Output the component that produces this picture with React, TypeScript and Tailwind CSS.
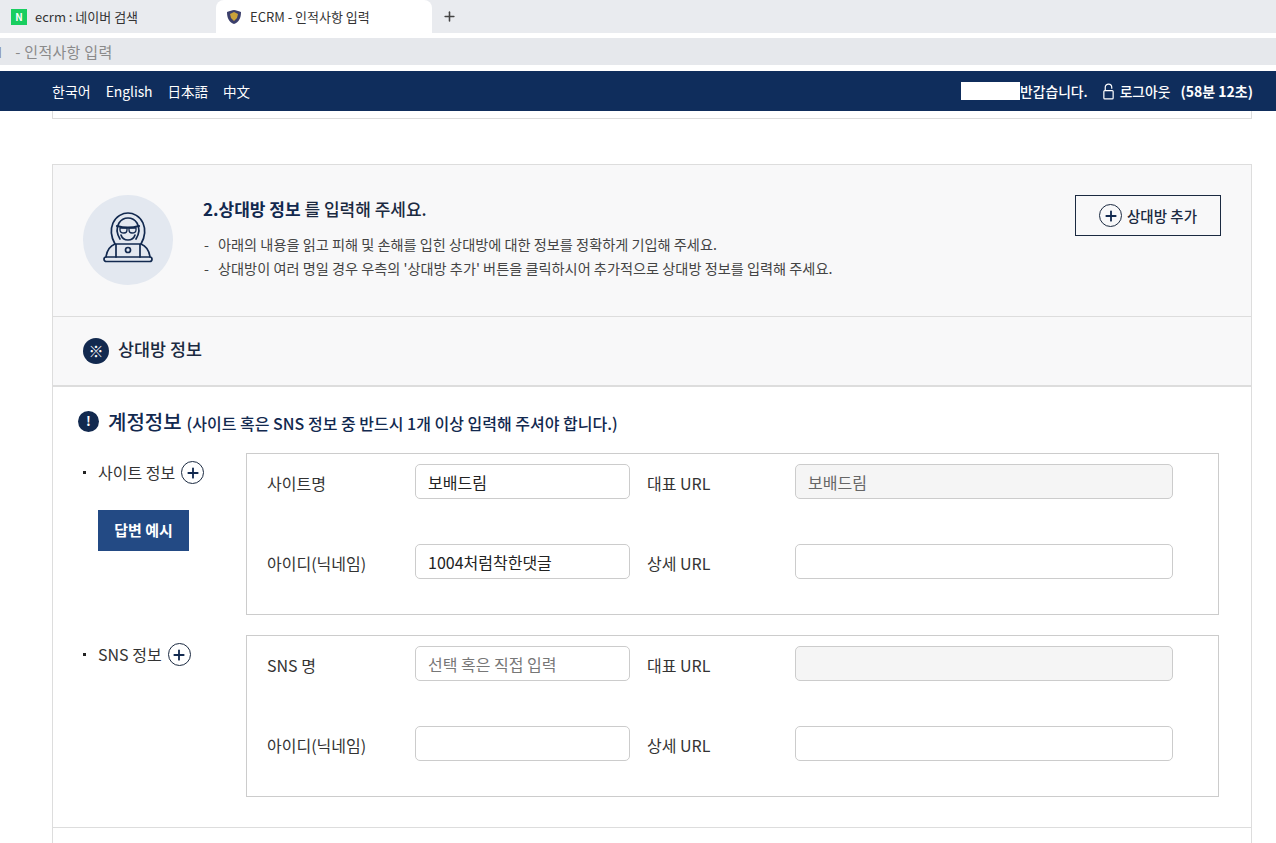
import { Plus } from 'lucide-react'

const CircleAdd = ({ className = '' }: { className?: string }) => (
  <span className={`w-[23px] h-[23px] rounded-full border border-[#1b2a41] flex items-center justify-center shrink-0 ${className}`}>
    <Plus className="w-4 h-4 text-[#12294f]" strokeWidth={2.75} />
  </span>
)

const Field = ({ value, placeholder, disabled, w }: { value?: string; placeholder?: string; disabled?: boolean; w: string }) => (
  <div
    className={`${w} h-[35px] rounded-[5px] border border-[#ccc] px-3 flex items-center text-[16px] ${
      disabled ? 'bg-[#f5f5f5] text-[#666]' : 'bg-white text-[#222]'
    }`}>
    {value ?? <span className="text-[#777]">{placeholder}</span>}
  </div>
)

const FormRow = ({ label, url, left, right }: { label: string; url: string; left: React.ReactNode; right: React.ReactNode }) => (
  <div className="flex items-start h-[35px]">
    <span className="w-[148px] text-[16px] text-[#333] pt-[5px] leading-[28px]">{label}</span>
    {left}
    <span className="w-[165px] pl-[17px] text-[16px] text-[#333] pt-[5px] leading-[28px]">{url}</span>
    {right}
  </div>
)

const HackerIcon = () => (
  <svg viewBox="0 0 52 56" className="w-[52px] h-[56px]" fill="none" stroke="#12294f" strokeWidth="1.7" strokeLinecap="round" strokeLinejoin="round">
    {/* hood */}
    <path d="M13 32C9 25 8 18 11 11 14 4 21 1 26 1s12 3 15 10c3 7 2 14-2 21" />
    <path d="M18 27c-3-5-4-11-1-16 2-3 5-5 9-5s7 2 9 5c3 5 2 11-1 16" />
    {/* glasses */}
    <path d="M15 14c7 2 15 2 22 0" strokeWidth="2.2" />
    <path d="M18 16h7v2c0 2-1 3-3 3s-4-1-4-3zM27 16h7v2c0 2-2 3-4 3s-3-1-3-3z" strokeWidth="1.3" />
    <path d="M19 23c1 3 4 5 7 5s6-2 7-5" />
    {/* shoulders */}
    <path d="M13 32c-5 2-8 6-9 13M39 32c5 2 8 6 9 13" />
    {/* laptop */}
    <path d="M14 45V32h24v13" />
    <circle cx="26" cy="38" r="2.500" />
    <rect x="2" y="45" width="48" height="4.500" rx="2.250" />
  </svg>
)

const SectionBox = ({ children }: { children: React.ReactNode }) => (
  <div className="w-[973px] h-[162px] border border-[#ccc] pt-[10px] pl-5 flex flex-col gap-[45px]">{children}</div>
)

export default function App() {
  return (
    <div
      className="w-[1276px] h-[843px] overflow-hidden bg-white text-[#222]"
      style={{ fontFamily: '"Noto Sans CJK KR", "Noto Sans", sans-serif' }}>
      {/* browser chrome */}
      <div className="h-[33px] bg-[#e9ebef] flex items-start">
        <div className="w-[216px] h-[33px] pl-[11px] flex items-center gap-2 text-[13px] text-[#333]">
          <span className="w-4 h-4 bg-[#19ce60] text-white text-[10px] font-bold flex items-center justify-center">N</span>
          <span>ecrm : 네이버 검색</span>
        </div>
        <div className="w-[216px] h-[33px] bg-white rounded-t-[8px] pl-[10px] flex items-center gap-2 text-[13px] text-[#333]">
          <svg viewBox="0 0 16 16" className="w-4 h-4">
            <path d="M1 3c3-1 5-2 7-2s4 1 7 2c0 6-2 10-7 12C3 13 1 9 1 3z" fill="#3b3f6b" />
            <path d="M4 5l4-2 4 2-1 4-3 3-3-3z" fill="#c9a23a" />
          </svg>
          <span>ECRM - 인적사항 입력</span>
        </div>
        <Plus className="w-[15px] h-[15px] ml-[10px] mt-[9px] text-[#444]" strokeWidth={2.5} />
      </div>
      <div className="h-[38px] pt-[5px] overflow-hidden">
        <div className="h-[27px] bg-[#e6e8ec] text-[15px] leading-[27px] tracking-[0.3px] text-[#8a8a8a] whitespace-nowrap overflow-hidden">
          <span className="block -ml-[10px]">
            <span className="mr-[9px]">M</span> - 인적사항 입력
          </span>
        </div>
      </div>

      {/* site header */}
      <header className="h-[40px] bg-[#0f2d5c] pl-[52px] pr-[23px] flex items-center justify-between text-white">
        <nav className="flex items-center gap-[15px] text-[14px]">
          <span>한국어</span>
          <span className="tracking-[-0.1px]">English</span>
          <span className="text-[13.5px]">日本語</span>
          <span className="text-[13.5px]">中文</span>
        </nav>
        <div className="flex items-center text-[14px] font-medium">
          <span className="w-[59px] h-[18px] bg-white" />
          <span className="text-[13.8px]">반갑습니다.</span>
          <svg viewBox="0 0 14 18" className="w-[13px] h-[17px] ml-[14px] mr-[5px]" fill="none" stroke="white" strokeWidth="1.3">
            <path d="M3.500 8V4.500a3.500 3.500 0 0 1 7 0V6" />
            <rect x="2" y="8" width="10" height="9" rx="1" />
          </svg>
          <span className="text-[13.8px]">로그아웃</span>
          <span className="ml-[10px] font-bold">(58분 12초)</span>
        </div>
      </header>

      <main className="pl-[52px] pr-[24px]">
        <div className="h-[8px] border-x border-b border-[#ddd]" />

        <section className="mt-[45px] border border-[#ddd] border-b-0">
          {/* intro */}
          <div className="h-[152px] bg-[#f8f8f9] border-b border-[#ddd] pl-[30px] pr-[30px] flex items-start">
            <div className="mt-[30px] w-[90px] h-[90px] rounded-full bg-[#e3e8f0] flex items-center justify-center">
              <HackerIcon />
            </div>
            <div className="ml-[30px] mt-[30px] flex-1">
              <h2 className="text-[17px] leading-[28px] font-medium text-[#1b2a41]">
                <b className="font-bold text-[#12294f]">2.상대방 정보</b> 를 입력해 주세요.
              </h2>
              <ul className="mt-[9px] text-[14.2px] leading-[24px] text-[#444]">
                <li className="flex">
                  <span className="w-[15px] pl-px">-</span>아래의 내용을 읽고 피해 및 손해를 입힌 상대방에 대한 정보를 정확하게 기입해 주세요.
                </li>
                <li className="flex">
                  <span className="w-[15px] pl-px">-</span>상대방이 여러 명일 경우 우측의 '상대방 추가' 버튼을 클릭하시어 추가적으로 상대방 정보를 입력해 주세요.
                </li>
              </ul>
            </div>
            <button className="mt-[30px] w-[146px] h-[41px] border border-[#1b2a41] flex items-center justify-center gap-[5px] text-[14.5px] font-medium text-[#1b2a41]">
              <CircleAdd />
              상대방 추가
            </button>
          </div>

          {/* section title */}
          <div className="h-[70px] bg-[#f8f8f9] border-b-2 border-[#ddd] pl-[30px] flex items-center gap-[9px]">
            <span className="w-[26px] h-[26px] rounded-full bg-[#12294f] text-white text-[15px] font-black flex items-center justify-center">※</span>
            <span className="pb-[3px] text-[17.4px] font-medium text-[#1b2a41]">상대방 정보</span>
          </div>

          {/* account info */}
          <div className="h-[441px] border-b border-[#ddd] pl-[25px] pr-[32px]">
            <div className="pt-[19px] flex items-center h-[52px]">
              <span className="mb-[3px] w-[21px] h-[21px] rounded-full bg-[#12294f] text-white text-[13px] font-bold flex items-center justify-center">!</span>
              <span className="mb-[2px] ml-[9px] text-[20px] font-medium text-[#12294f]">계정정보</span>
              <span className="ml-[5px] text-[16px] font-medium text-[#12294f]">(사이트 혹은 SNS 정보 중 반드시 1개 이상 입력해 주셔야 합니다.)</span>
            </div>

            <div className="mt-[14px] flex justify-between">
              <div className="w-[168px] pt-[8px]">
                <div className="flex items-center text-[16px] text-[#333] h-[24px]">
                  <span className="w-[3px] h-[3px] bg-[#222] mb-[2px] mr-[12px] ml-[5px]" />
                  <span className="pb-[2px]">사이트 정보</span>
                  <CircleAdd className="ml-[6px] mb-[1px]" />
                </div>
                <button className="mt-[25px] ml-[20px] w-[91px] h-[41px] bg-[#234a84] text-white text-[15px] font-bold pb-px">답변 예시</button>
              </div>
              <SectionBox>
                <FormRow
                  label="사이트명"
                  url="대표 URL"
                  left={<Field w="w-[215px]" value="보배드림" />}
                  right={<Field w="w-[378px]" value="보배드림" disabled />}
                />
                <FormRow
                  label="아이디(닉네임)"
                  url="상세 URL"
                  left={<Field w="w-[215px]" value="1004처럼착한댓글" />}
                  right={<Field w="w-[378px]" value="" />}
                />
              </SectionBox>
            </div>

            <div className="mt-[20px] flex justify-between">
              <div className="w-[168px] pt-[8px]">
                <div className="flex items-center text-[16px] text-[#333] h-[24px]">
                  <span className="w-[3px] h-[3px] bg-[#222] mb-[2px] mr-[12px] ml-[5px]" />
                  <span className="pb-[2px]">SNS 정보</span>
                  <CircleAdd className="ml-[6px] mb-[1px]" />
                </div>
              </div>
              <SectionBox>
                <FormRow
                  label="SNS 명"
                  url="대표 URL"
                  left={<Field w="w-[215px]" placeholder="선택 혹은 직접 입력" />}
                  right={<Field w="w-[378px]" value="" disabled />}
                />
                <FormRow
                  label="아이디(닉네임)"
                  url="상세 URL"
                  left={<Field w="w-[215px]" value="" />}
                  right={<Field w="w-[378px]" value="" />}
                />
              </SectionBox>
            </div>
          </div>
          <div className="h-[40px]" />
        </section>
      </main>
    </div>
  )
}
